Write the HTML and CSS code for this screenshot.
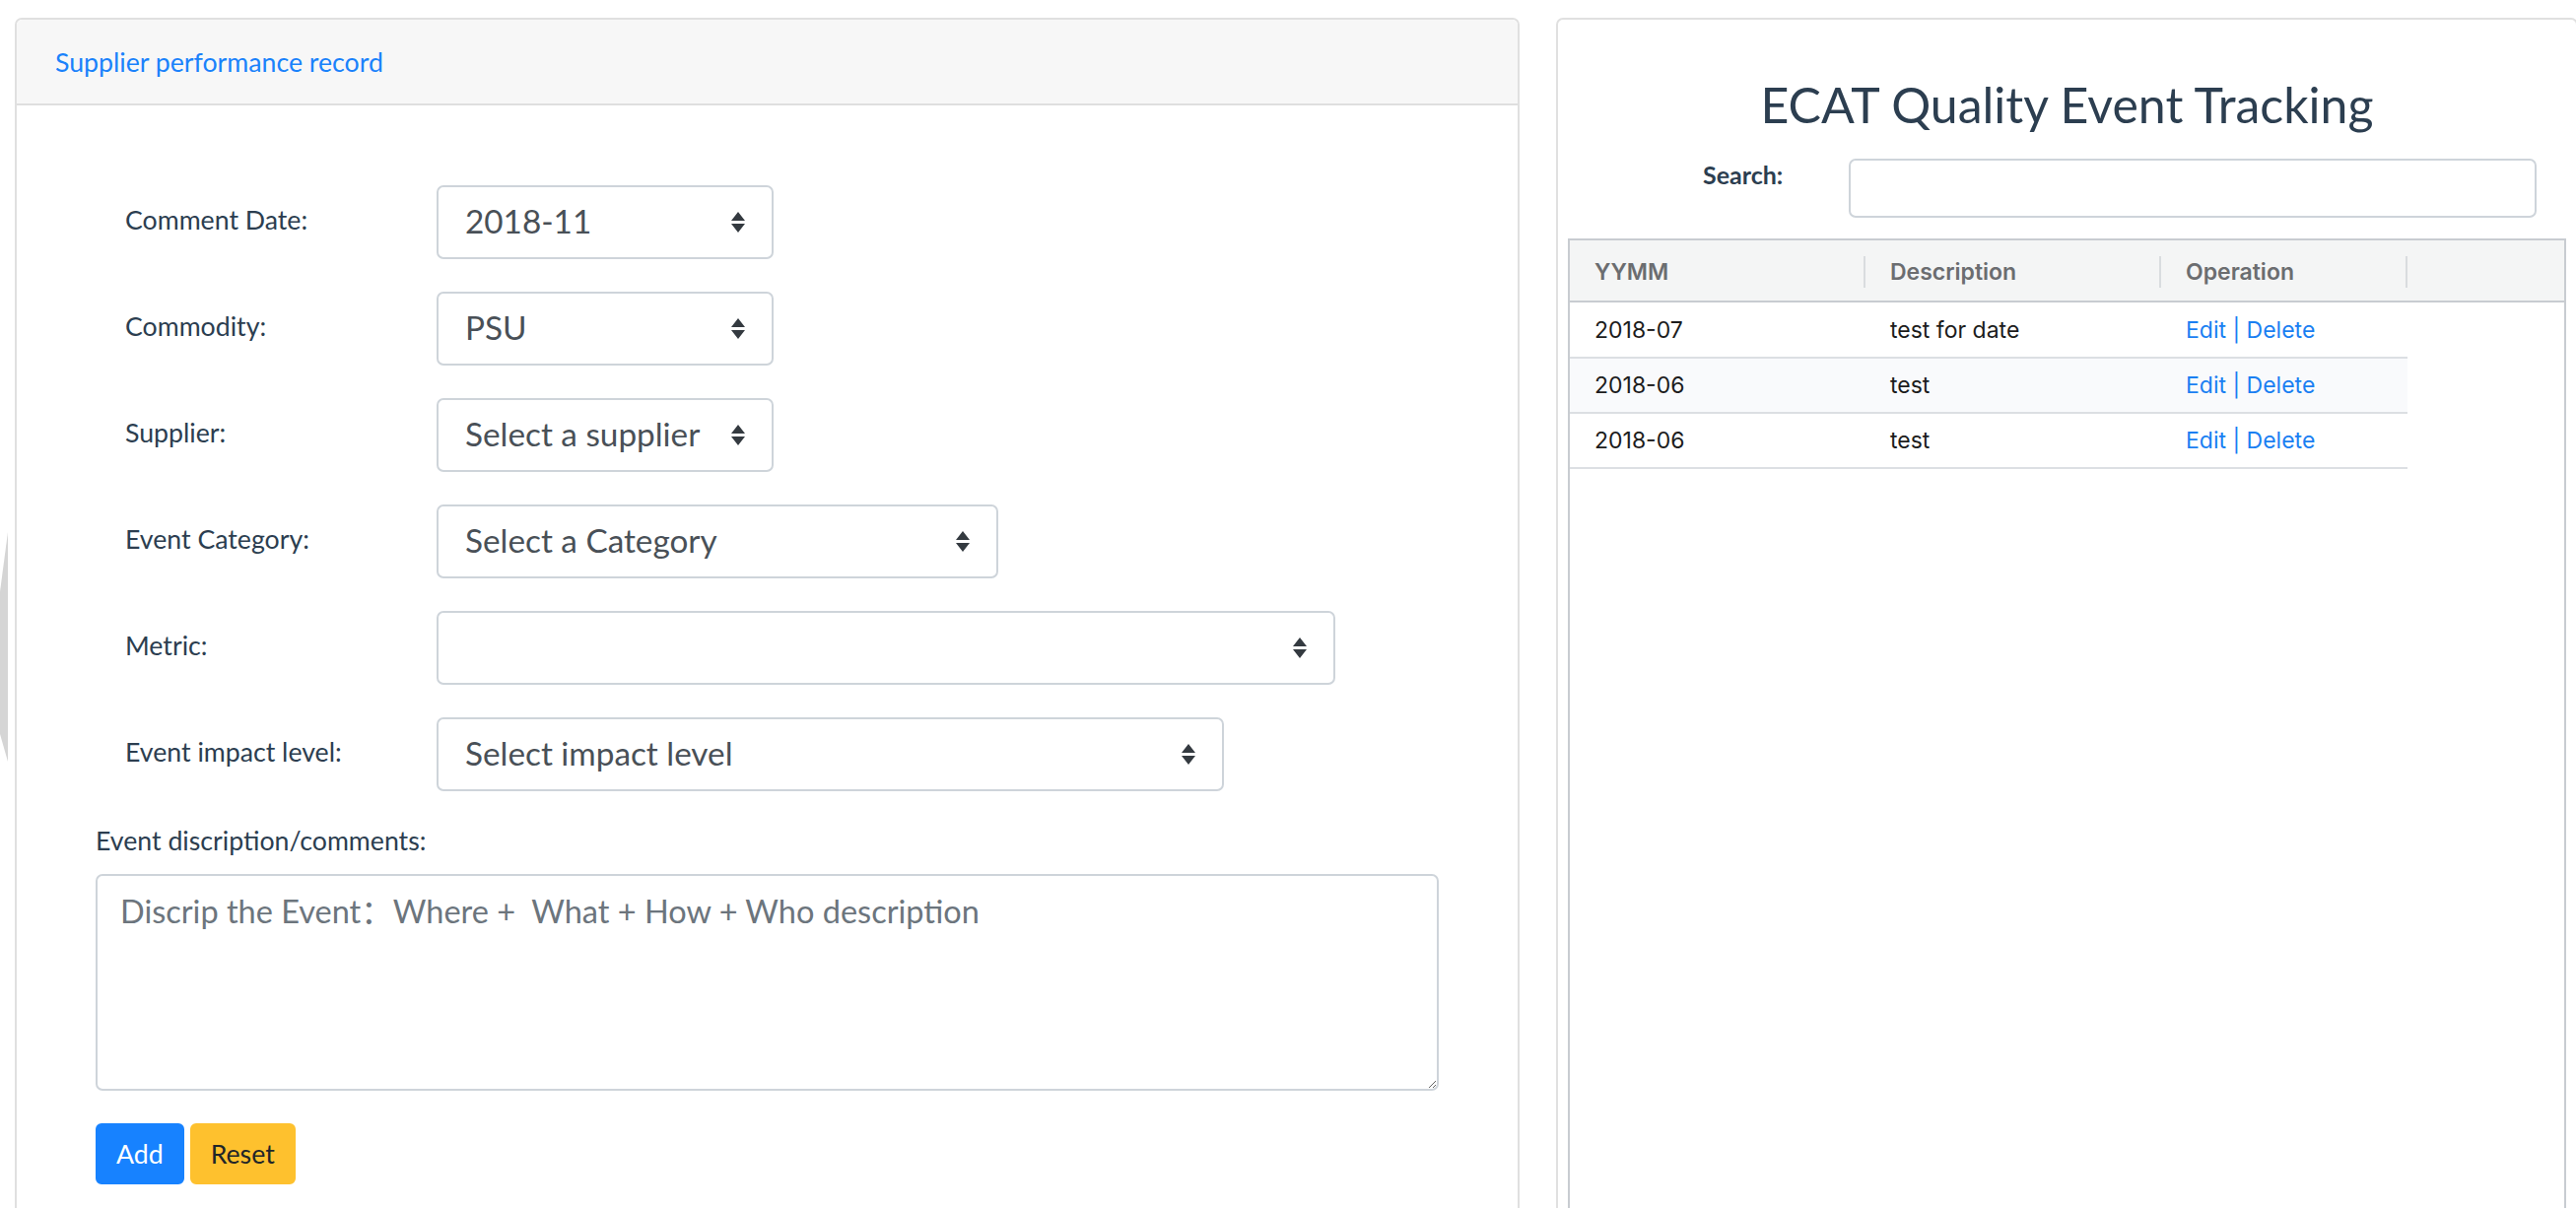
FILE: index.html
```html
<!DOCTYPE html>
<html lang="en">
<head>
<meta charset="utf-8">
<title>ECAT Quality Event Tracking</title>
<link rel="stylesheet" href="styles.css">
</head>
<body>
<div class="edge-tab"></div>
<div class="page">
  <section class="card form-card">
    <div class="card-header">Supplier performance record</div>
    <div class="card-body">
      <div class="form-rows">
        <div class="form-row">
          <label class="row-label">Comment Date:</label>
          <div class="select w-sm"><span class="val">2018-11</span><svg class="caret" width="14" height="21" viewBox="0 0 14 21"><path d="M7 0L14 9H0Z M0 12H14L7 21Z"/></svg></div>
        </div>
        <div class="form-row">
          <label class="row-label">Commodity:</label>
          <div class="select w-sm"><span class="val">PSU</span><svg class="caret" width="14" height="21" viewBox="0 0 14 21"><path d="M7 0L14 9H0Z M0 12H14L7 21Z"/></svg></div>
        </div>
        <div class="form-row">
          <label class="row-label">Supplier:</label>
          <div class="select w-sm"><span class="val">Select a supplier</span><svg class="caret" width="14" height="21" viewBox="0 0 14 21"><path d="M7 0L14 9H0Z M0 12H14L7 21Z"/></svg></div>
        </div>
        <div class="form-row">
          <label class="row-label">Event Category:</label>
          <div class="select w-md"><span class="val">Select a Category</span><svg class="caret" width="14" height="21" viewBox="0 0 14 21"><path d="M7 0L14 9H0Z M0 12H14L7 21Z"/></svg></div>
        </div>
        <div class="form-row">
          <label class="row-label">Metric:</label>
          <div class="select w-xl"><span class="val"></span><svg class="caret" width="14" height="21" viewBox="0 0 14 21"><path d="M7 0L14 9H0Z M0 12H14L7 21Z"/></svg></div>
        </div>
        <div class="form-row">
          <label class="row-label">Event impact level:</label>
          <div class="select w-lg"><span class="val">Select impact level</span><svg class="caret" width="14" height="21" viewBox="0 0 14 21"><path d="M7 0L14 9H0Z M0 12H14L7 21Z"/></svg></div>
        </div>
      </div>
      <label class="comments-label">Event discription/comments:</label>
      <textarea class="comments" placeholder="Discrip the Event：Where +  What + How + Who description"></textarea>
      <div class="actions">
        <button class="btn btn-primary" type="button">Add</button>
        <button class="btn btn-warning" type="button">Reset</button>
      </div>
    </div>
  </section>

  <section class="card list-card">
    <h3 class="title">ECAT Quality Event Tracking</h3>
    <div class="search-row">
      <label class="search-label">Search:</label>
      <input class="search-input" type="text">
    </div>
    <div class="table-wrap">
      <div class="thead">
        <div class="th c1"><div class="th-in">YYMM</div></div>
        <div class="th c2"><div class="th-in">Description</div></div>
        <div class="th c3"><div class="th-in">Operation</div></div>
      </div>
      <table class="tbody">
        <tr><td class="c1">2018-07</td><td class="c2">test for date</td><td class="c3"><a class="op">Edit</a> | <a class="op">Delete</a></td></tr>
        <tr class="stripe"><td class="c1">2018-06</td><td class="c2">test</td><td class="c3"><a class="op">Edit</a> | <a class="op">Delete</a></td></tr>
        <tr><td class="c1">2018-06</td><td class="c2">test</td><td class="c3"><a class="op">Edit</a> | <a class="op">Delete</a></td></tr>
      </table>
    </div>
  </section>
</div>
</body>
</html>
```

FILE: styles.css
```css
html, body {
  margin: 0;
  padding: 0;
}
body {
  width: 2614px;
  height: 1226px;
  overflow: hidden;
  background: #ffffff;
  font-family: Lato, "Noto Sans CJK SC", sans-serif;
  color: #2c3e50;
  position: relative;
}

.edge-tab {
  position: absolute;
  left: 0;
  top: 540px;
  width: 8px;
  height: 233px;
  background: #d5d5d5;
  clip-path: polygon(100% 0, 100% 100%, 0 88%, 0 26%);
}

.page {
  display: flex;
  align-items: flex-start;
  gap: 37px;
  padding: 18px 0 0 15px;
}

.card {
  flex-shrink: 0;
  box-sizing: border-box;
  border: 2px solid #e0e0e0;
  border-radius: 7px;
  background: #fff;
  height: 1320px;
}

.form-card {
  width: 1527px;
}

.card-header {
  height: 85px;
  display: flex;
  align-items: center;
  padding-left: 39px;
  background: #f7f7f7;
  border-bottom: 2px solid #dfdfdf;
  border-radius: 6px 6px 0 0;
  color: #1a82fb;
  font-size: 26.7px;
}

.card-body {
  padding: 81px 0 0 80px;
}

.form-rows {
  display: flex;
  flex-direction: column;
  gap: 33px;
  padding-left: 30px;
}

.form-row {
  display: flex;
  align-items: center;
  height: 75px;
}

.row-label {
  flex: 0 0 316px;
  font-size: 26.7px;
  line-height: 40px;
  padding-bottom: 6px;
}

.select {
  box-sizing: border-box;
  height: 75px;
  display: flex;
  align-items: center;
  justify-content: space-between;
  border: 2px solid #ced4da;
  border-radius: 7px;
  padding: 0 27px 0 27px;
  font-size: 33.3px;
  color: #495057;
  background: #fff;
}
.val {
  padding-bottom: 3px;
}
.w-sm { width: 342px; }
.w-md { width: 570px; }
.w-lg { width: 799px; }
.w-xl { width: 912px; }

.caret {
  fill: #343a40;
  flex-shrink: 0;
}

.comments-label {
  display: block;
  margin-top: 30px;
  font-size: 26.7px;
  line-height: 40px;
}

.comments {
  display: block;
  box-sizing: border-box;
  margin-top: 14px;
  width: 1363px;
  height: 220px;
  border: 2px solid #ced4da;
  border-radius: 7px;
  padding: 11px 23px;
  font-family: Lato, "Noto Sans CJK SC", sans-serif;
  font-size: 32.5px;
  line-height: 50px;
  color: #495057;
  outline: none;
}
.comments::placeholder {
  color: #6c757d;
  opacity: 1;
}

.actions {
  display: flex;
  gap: 6px;
  margin-top: 33px;
}

.btn {
  box-sizing: border-box;
  height: 62px;
  border: 2px solid transparent;
  border-radius: 6px;
  padding: 0 19px;
  font-family: Lato, sans-serif;
  font-size: 26.7px;
  line-height: 1;
}
.btn-primary {
  background: #1782ff;
  border-color: #1782ff;
  color: #fff;
}
.btn-warning {
  background: #fec12e;
  border-color: #fec12e;
  color: #212529;
}

/* right card */
.list-card {
  width: 1037px;
  padding: 0 10px;
}

.title {
  margin: 56px 0 0;
  height: 61px;
  line-height: 61px;
  text-align: center;
  font-weight: 400;
  font-size: 50px;
  color: #2c3e50;
}

.search-row {
  display: flex;
  align-items: flex-start;
  margin-top: 24px;
  padding-left: 137px;
}

.search-label {
  flex: 0 0 148px;
  font-size: 25px;
  font-weight: 700;
  line-height: 32px;
  color: #2c3e50;
}

.search-input {
  box-sizing: border-box;
  width: 698px;
  height: 60px;
  border: 2px solid #ced4da;
  border-radius: 7px;
  outline: none;
}

.table-wrap {
  margin-top: 21px;
  border: 2px solid #c8ccd1;
  height: 1100px;
  font-family: Inter, "Noto Sans", sans-serif;
  font-size: 23px;
}

.thead {
  display: flex;
  align-items: center;
  height: 61px;
  background: #f4f5f5;
  border-bottom: 2px solid #c8ccd1;
}

.th-in {
  box-sizing: border-box;
  height: 32px;
  line-height: 32px;
  padding-left: 25px;
  border-right: 2px solid #d9dcdf;
  color: #6b6d70;
  font-weight: 600;
  margin-top: 3px;
}

.c1 { width: 300px; }
.c2 { width: 300px; }
.c3 { width: 250px; }
.th { flex-shrink: 0; }

.tbody {
  border-collapse: collapse;
  width: 850px;
  table-layout: fixed;
}

.tbody td {
  box-sizing: border-box;
  height: 56px;
  padding: 0 0 0 25px;
  border-bottom: 2px solid #dcdfe3;
  color: #1c1c1c;
  white-space: nowrap;
}

.tbody tr.stripe td {
  background: #f9fafc;
}

.tbody td.c3 {
  color: #1a7ff2;
}

.op {
  color: #1a7ff2;
  text-decoration: none;
}
```
